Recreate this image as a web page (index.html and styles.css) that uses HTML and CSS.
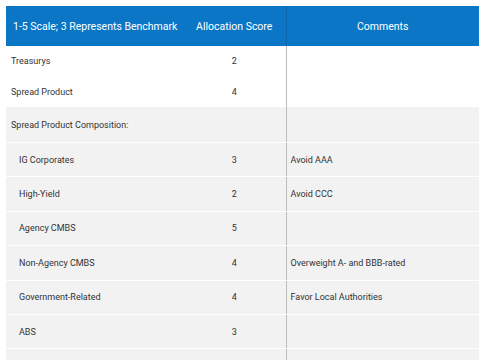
FILE: index.html
```html
<!DOCTYPE html>
<html>
<head>
<meta charset="utf-8">
<link rel="stylesheet" href="styles.css">
</head>
<body>
<table class="alloc">
  <colgroup>
    <col class="c-name">
    <col class="c-score">
    <col class="c-comment">
  </colgroup>
  <thead>
    <tr class="head">
      <th class="h-name">1-5 Scale; 3 Represents Benchmark</th>
      <th class="h-score">Allocation Score</th>
      <th class="h-comment">Comments</th>
    </tr>
  </thead>
  <tbody>
    <tr class="row plain"><td class="name">Treasurys</td><td class="score">2</td><td class="comment"></td></tr>
    <tr class="row plain"><td class="name">Spread Product</td><td class="score">4</td><td class="comment"></td></tr>
    <tr class="row grey group"><td class="name">Spread Product Composition:</td><td class="score"></td><td class="comment"></td></tr>
    <tr class="row grey"><td class="name sub">IG Corporates</td><td class="score">3</td><td class="comment">Avoid AAA</td></tr>
    <tr class="row grey"><td class="name sub">High-Yield</td><td class="score">2</td><td class="comment">Avoid CCC</td></tr>
    <tr class="row grey"><td class="name sub">Agency CMBS</td><td class="score">5</td><td class="comment"></td></tr>
    <tr class="row grey"><td class="name sub">Non-Agency CMBS</td><td class="score">4</td><td class="comment">Overweight A- and BBB-rated</td></tr>
    <tr class="row grey"><td class="name sub">Government-Related</td><td class="score">4</td><td class="comment">Favor Local Authorities</td></tr>
    <tr class="row grey"><td class="name sub">ABS</td><td class="score">3</td><td class="comment"></td></tr>
    <tr class="row grey tail"><td class="name sub"></td><td class="score"></td><td class="comment"></td></tr>
  </tbody>
</table>
</body>
</html>
```
FILE: styles.css
```css
html, body {
  margin: 0;
  padding: 0;
  background: #ffffff;
  overflow: hidden;
}
body {
  padding: 6px 0 0 6px;
  font-family: Roboto, "Liberation Sans", sans-serif;
  color: #333333;
}
.alloc {
  border-collapse: collapse;
  table-layout: fixed;
  width: 473px;
}
.c-name { width: 177px; }
.c-score { width: 103px; }
.c-comment { width: 193px; }

.head {
  background: #0b76c6;
  height: 40px;
}
.head th {
  color: #ffffff;
  font-weight: 400;
  font-size: 10.5px;
  white-space: nowrap;
  padding: 0;
  vertical-align: middle;
}
.h-name {
  text-align: left;
  padding-left: 7px !important;
}
.h-score {
  text-align: center;
  border-right: 1px solid #0a66ad;
}
.h-comment {
  text-align: center;
}

.row td {
  font-size: 9px;
  padding: 0;
  vertical-align: middle;
}
.plain {
  height: 30.5px;
}
.plain td {
  background: #ffffff;
}
.grey td {
  background: #f2f2f2;
  border-bottom: 1px solid #ffffff;
  height: 33.4px;
}
.group td {
  height: 35px;
}
.name {
  padding-left: 5px !important;
}
.name.sub {
  padding-left: 13px !important;
}
.score {
  text-align: center;
  border-right: 1px solid #bdbdbd;
}
.comment {
  padding-left: 4px !important;
}
```
